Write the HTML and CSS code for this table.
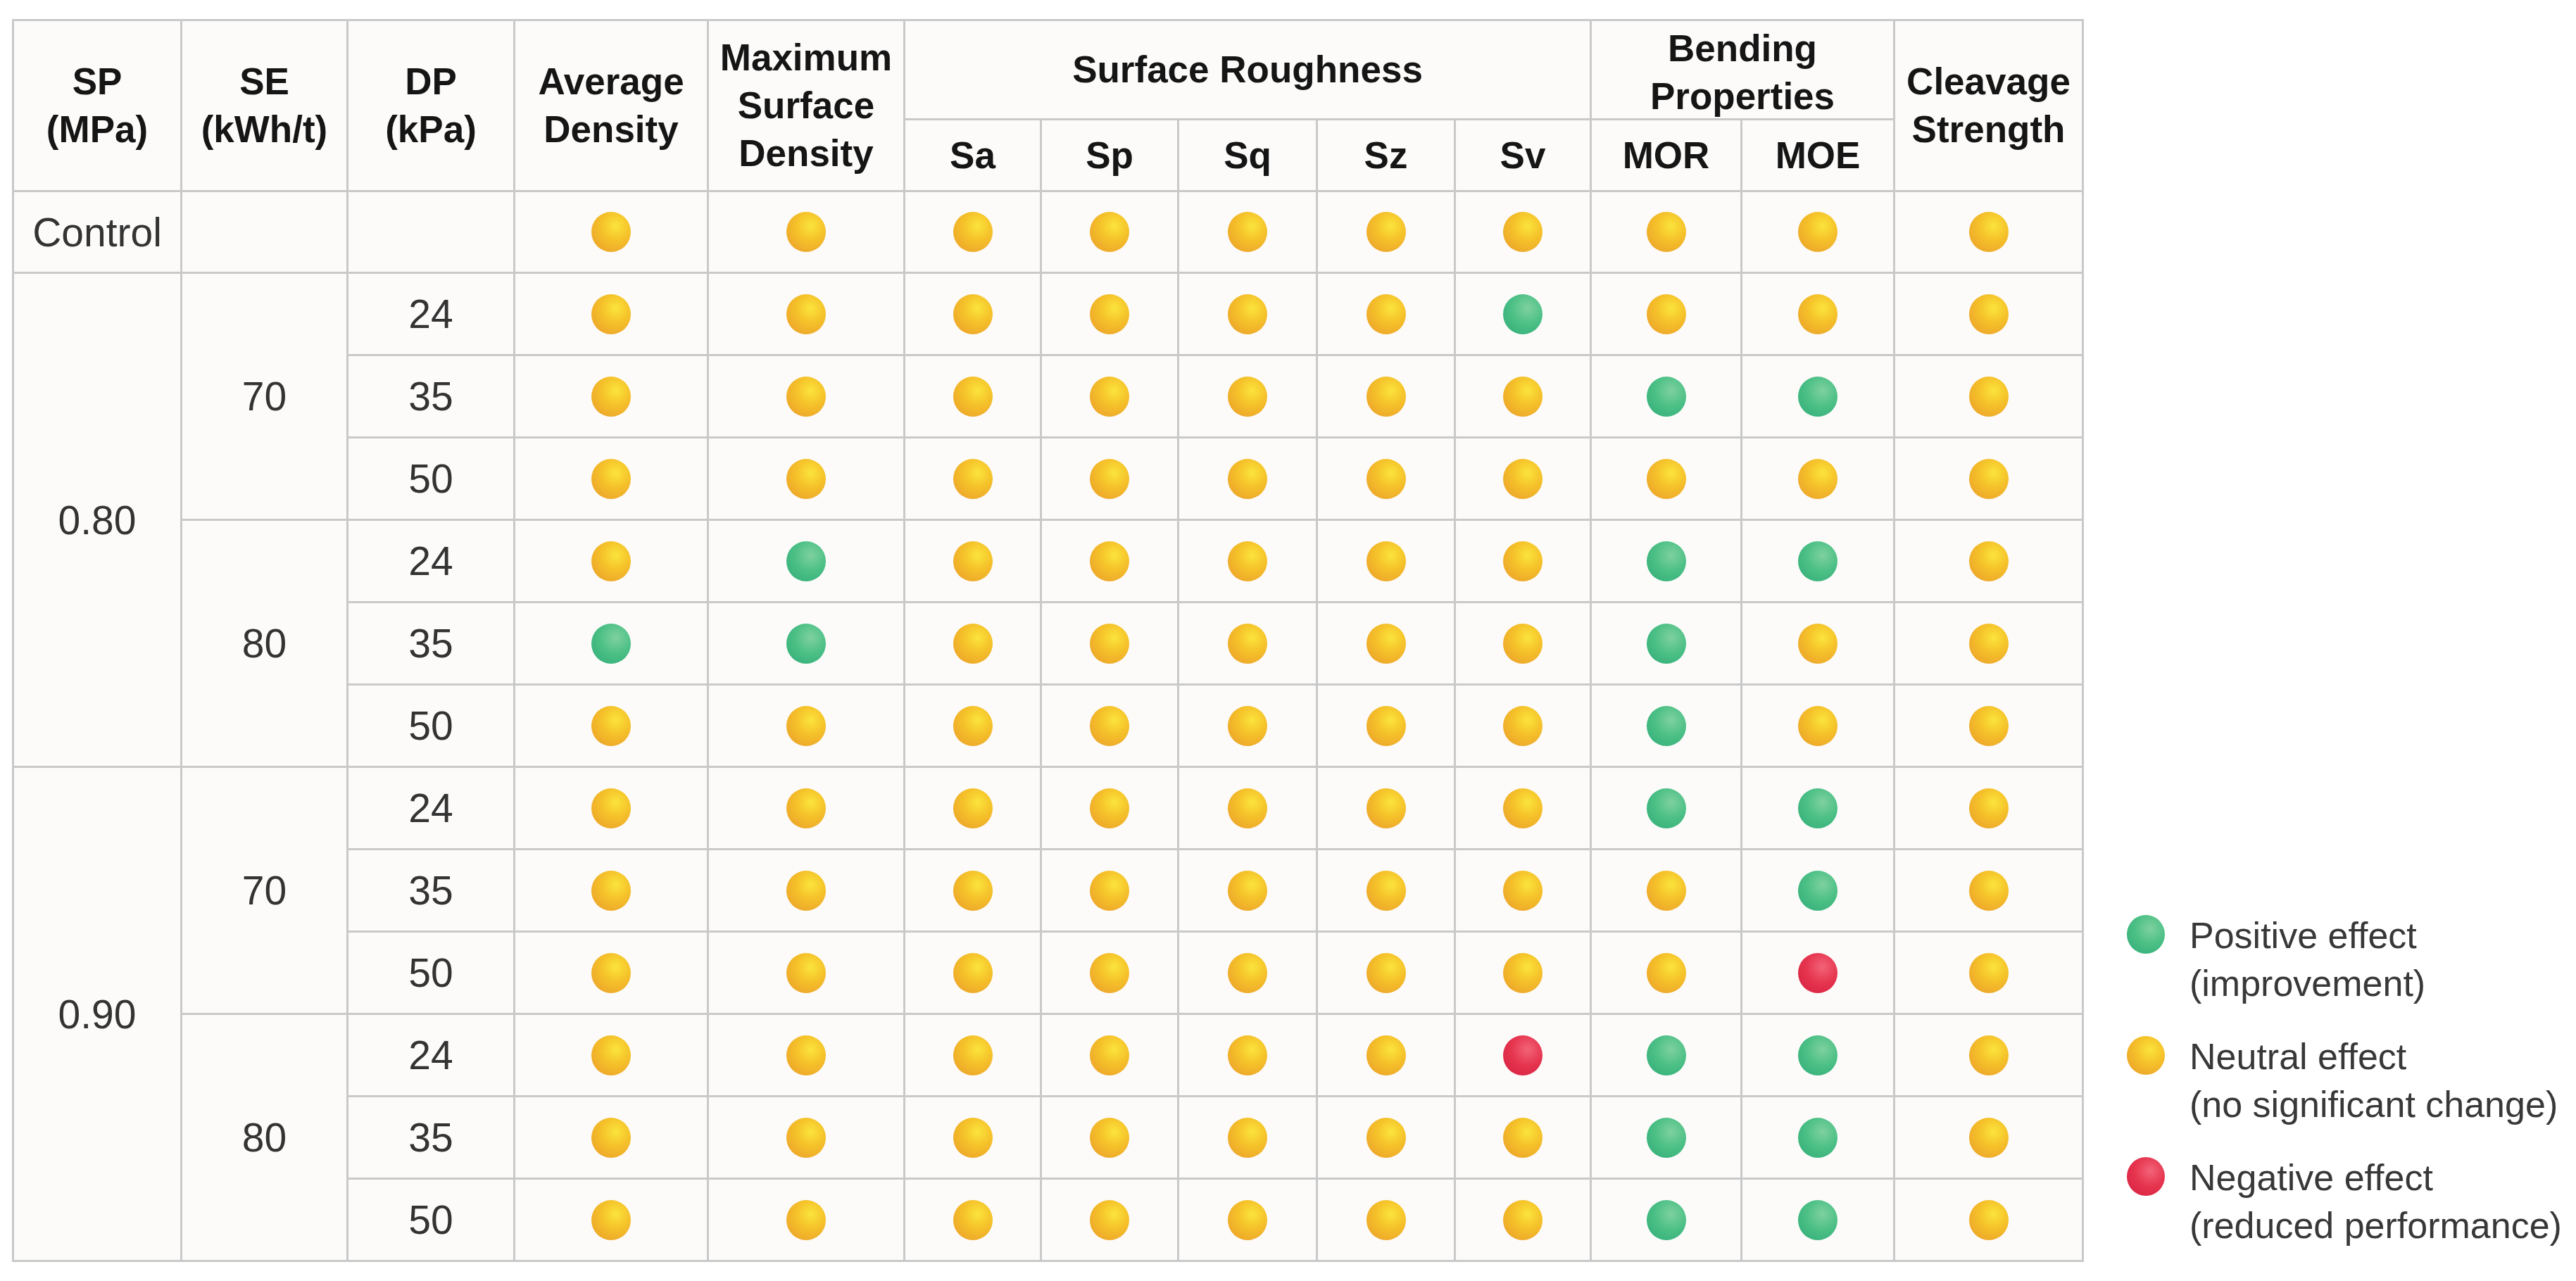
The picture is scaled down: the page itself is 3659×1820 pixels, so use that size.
FILE: index.html
```html
<!DOCTYPE html>
<html lang="en">
<head>
<meta charset="utf-8">
<title>Effects table</title>
<link rel="stylesheet" href="styles.css">
</head>
<body>
<div class="page">
  <div class="grid">
    <div class="cell head span-r2">SP<br>(MPa)</div>
    <div class="cell head span-r2">SE<br>(kWh/t)</div>
    <div class="cell head span-r2">DP<br>(kPa)</div>
    <div class="cell head span-r2">Average<br>Density</div>
    <div class="cell head span-r2">Maximum<br>Surface<br>Density</div>
    <div class="cell head span-c5">Surface Roughness</div>
    <div class="cell head span-c2 bend">Bending<br>Properties</div>
    <div class="cell head span-r2">Cleavage<br>Strength</div>
    <div class="cell head">Sa</div>
    <div class="cell head">Sp</div>
    <div class="cell head">Sq</div>
    <div class="cell head">Sz</div>
    <div class="cell head">Sv</div>
    <div class="cell head">MOR</div>
    <div class="cell head">MOE</div>

    <div class="cell txt">Control</div><div class="cell"></div><div class="cell"></div>
    <div class="cell"><i class="dot y"></i></div><div class="cell"><i class="dot y"></i></div>
    <div class="cell"><i class="dot y"></i></div><div class="cell"><i class="dot y"></i></div><div class="cell"><i class="dot y"></i></div><div class="cell"><i class="dot y"></i></div><div class="cell"><i class="dot y"></i></div>
    <div class="cell"><i class="dot y"></i></div><div class="cell"><i class="dot y"></i></div><div class="cell"><i class="dot y"></i></div>

    <div class="cell txt span-r6">0.80</div>
    <div class="cell txt span-r3">70</div>
    <div class="cell txt">24</div>
    <div class="cell"><i class="dot y"></i></div><div class="cell"><i class="dot y"></i></div>
    <div class="cell"><i class="dot y"></i></div><div class="cell"><i class="dot y"></i></div><div class="cell"><i class="dot y"></i></div><div class="cell"><i class="dot y"></i></div><div class="cell"><i class="dot g"></i></div>
    <div class="cell"><i class="dot y"></i></div><div class="cell"><i class="dot y"></i></div><div class="cell"><i class="dot y"></i></div>

    <div class="cell txt">35</div>
    <div class="cell"><i class="dot y"></i></div><div class="cell"><i class="dot y"></i></div>
    <div class="cell"><i class="dot y"></i></div><div class="cell"><i class="dot y"></i></div><div class="cell"><i class="dot y"></i></div><div class="cell"><i class="dot y"></i></div><div class="cell"><i class="dot y"></i></div>
    <div class="cell"><i class="dot g"></i></div><div class="cell"><i class="dot g"></i></div><div class="cell"><i class="dot y"></i></div>

    <div class="cell txt">50</div>
    <div class="cell"><i class="dot y"></i></div><div class="cell"><i class="dot y"></i></div>
    <div class="cell"><i class="dot y"></i></div><div class="cell"><i class="dot y"></i></div><div class="cell"><i class="dot y"></i></div><div class="cell"><i class="dot y"></i></div><div class="cell"><i class="dot y"></i></div>
    <div class="cell"><i class="dot y"></i></div><div class="cell"><i class="dot y"></i></div><div class="cell"><i class="dot y"></i></div>

    <div class="cell txt span-r3">80</div>
    <div class="cell txt">24</div>
    <div class="cell"><i class="dot y"></i></div><div class="cell"><i class="dot g"></i></div>
    <div class="cell"><i class="dot y"></i></div><div class="cell"><i class="dot y"></i></div><div class="cell"><i class="dot y"></i></div><div class="cell"><i class="dot y"></i></div><div class="cell"><i class="dot y"></i></div>
    <div class="cell"><i class="dot g"></i></div><div class="cell"><i class="dot g"></i></div><div class="cell"><i class="dot y"></i></div>

    <div class="cell txt">35</div>
    <div class="cell"><i class="dot g"></i></div><div class="cell"><i class="dot g"></i></div>
    <div class="cell"><i class="dot y"></i></div><div class="cell"><i class="dot y"></i></div><div class="cell"><i class="dot y"></i></div><div class="cell"><i class="dot y"></i></div><div class="cell"><i class="dot y"></i></div>
    <div class="cell"><i class="dot g"></i></div><div class="cell"><i class="dot y"></i></div><div class="cell"><i class="dot y"></i></div>

    <div class="cell txt">50</div>
    <div class="cell"><i class="dot y"></i></div><div class="cell"><i class="dot y"></i></div>
    <div class="cell"><i class="dot y"></i></div><div class="cell"><i class="dot y"></i></div><div class="cell"><i class="dot y"></i></div><div class="cell"><i class="dot y"></i></div><div class="cell"><i class="dot y"></i></div>
    <div class="cell"><i class="dot g"></i></div><div class="cell"><i class="dot y"></i></div><div class="cell"><i class="dot y"></i></div>

    <div class="cell txt span-r6">0.90</div>
    <div class="cell txt span-r3">70</div>
    <div class="cell txt">24</div>
    <div class="cell"><i class="dot y"></i></div><div class="cell"><i class="dot y"></i></div>
    <div class="cell"><i class="dot y"></i></div><div class="cell"><i class="dot y"></i></div><div class="cell"><i class="dot y"></i></div><div class="cell"><i class="dot y"></i></div><div class="cell"><i class="dot y"></i></div>
    <div class="cell"><i class="dot g"></i></div><div class="cell"><i class="dot g"></i></div><div class="cell"><i class="dot y"></i></div>

    <div class="cell txt">35</div>
    <div class="cell"><i class="dot y"></i></div><div class="cell"><i class="dot y"></i></div>
    <div class="cell"><i class="dot y"></i></div><div class="cell"><i class="dot y"></i></div><div class="cell"><i class="dot y"></i></div><div class="cell"><i class="dot y"></i></div><div class="cell"><i class="dot y"></i></div>
    <div class="cell"><i class="dot y"></i></div><div class="cell"><i class="dot g"></i></div><div class="cell"><i class="dot y"></i></div>

    <div class="cell txt">50</div>
    <div class="cell"><i class="dot y"></i></div><div class="cell"><i class="dot y"></i></div>
    <div class="cell"><i class="dot y"></i></div><div class="cell"><i class="dot y"></i></div><div class="cell"><i class="dot y"></i></div><div class="cell"><i class="dot y"></i></div><div class="cell"><i class="dot y"></i></div>
    <div class="cell"><i class="dot y"></i></div><div class="cell"><i class="dot r"></i></div><div class="cell"><i class="dot y"></i></div>

    <div class="cell txt span-r3">80</div>
    <div class="cell txt">24</div>
    <div class="cell"><i class="dot y"></i></div><div class="cell"><i class="dot y"></i></div>
    <div class="cell"><i class="dot y"></i></div><div class="cell"><i class="dot y"></i></div><div class="cell"><i class="dot y"></i></div><div class="cell"><i class="dot y"></i></div><div class="cell"><i class="dot r"></i></div>
    <div class="cell"><i class="dot g"></i></div><div class="cell"><i class="dot g"></i></div><div class="cell"><i class="dot y"></i></div>

    <div class="cell txt">35</div>
    <div class="cell"><i class="dot y"></i></div><div class="cell"><i class="dot y"></i></div>
    <div class="cell"><i class="dot y"></i></div><div class="cell"><i class="dot y"></i></div><div class="cell"><i class="dot y"></i></div><div class="cell"><i class="dot y"></i></div><div class="cell"><i class="dot y"></i></div>
    <div class="cell"><i class="dot g"></i></div><div class="cell"><i class="dot g"></i></div><div class="cell"><i class="dot y"></i></div>

    <div class="cell txt">50</div>
    <div class="cell"><i class="dot y"></i></div><div class="cell"><i class="dot y"></i></div>
    <div class="cell"><i class="dot y"></i></div><div class="cell"><i class="dot y"></i></div><div class="cell"><i class="dot y"></i></div><div class="cell"><i class="dot y"></i></div><div class="cell"><i class="dot y"></i></div>
    <div class="cell"><i class="dot g"></i></div><div class="cell"><i class="dot g"></i></div><div class="cell"><i class="dot y"></i></div>
  </div>

  <div class="legend">
    <div class="legend-item"><i class="dot g ldot"></i><div class="legend-text">Positive effect<br>(improvement)</div></div>
    <div class="legend-item"><i class="dot y ldot"></i><div class="legend-text">Neutral effect<br>(no significant change)</div></div>
    <div class="legend-item"><i class="dot r ldot"></i><div class="legend-text">Negative effect<br>(reduced performance)</div></div>
  </div>
</div>
</body>
</html>
```

FILE: styles.css
```css
html, body {
  margin: 0;
  padding: 0;
  background: #ffffff;
}

body {
  font-family: "Liberation Sans", Arial, sans-serif;
  color: #333333;
}

.page {
  display: flex;
  align-items: flex-end;
  gap: 61px;
  padding: 27px 0 0 17px;
}

.grid {
  display: grid;
  grid-template-columns: 236px 233px 234px 272px 276px 191px 192px 194px 193px 190px 211px 214px 265px;
  grid-template-rows: 138px 99px 113px repeat(12, 114px);
  gap: 3px;
  padding: 3px;
  background: #c9c9c9;
  flex: none;
}

.cell {
  background: #fcfbfa;
  display: flex;
  align-items: center;
  justify-content: center;
  text-align: center;
}

.head {
  font-weight: bold;
  font-size: 53px;
  line-height: 68px;
  color: #151515;
}

.bend {
  padding-top: 8px;
}

.txt {
  font-size: 57px;
  color: #333333;
}

.span-r2 { grid-row: span 2; }
.span-r3 { grid-row: span 3; }
.span-r6 { grid-row: span 6; }
.span-c5 { grid-column: span 5; }
.span-c2 { grid-column: span 2; }

.dot {
  display: block;
  width: 56px;
  height: 57px;
  border-radius: 50%;
}

.dot.y {
  background: radial-gradient(circle at 62% 35%, #fbe43c 0%, #f5c22a 40%, #eda72a 80%, #e8962c 100%);
}

.dot.g {
  background: radial-gradient(circle at 62% 35%, #7fd19e 0%, #4cc086 45%, #36b07a 85%, #2ea574 100%);
}

.dot.r {
  background: radial-gradient(circle at 62% 35%, #f26479 0%, #e6354f 45%, #d92444 85%, #cc1c3c 100%);
}

.legend {
  display: flex;
  flex-direction: column;
  gap: 36px;
  margin-bottom: 18px;
}

.legend-item {
  display: flex;
  align-items: flex-start;
  gap: 35px;
}

.ldot {
  width: 54px;
  height: 55px;
  margin-top: 5px;
  flex: none;
}

.legend-text {
  font-size: 52px;
  line-height: 68px;
  color: #383838;
  white-space: nowrap;
}
```
